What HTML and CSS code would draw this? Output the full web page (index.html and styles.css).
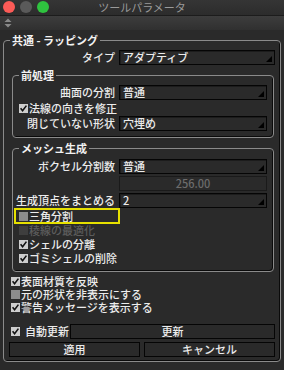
FILE: index.html
```html
<!DOCTYPE html>
<html lang="ja">
<head>
<meta charset="utf-8">
<title>ツールパラメータ</title>
<link rel="stylesheet" href="styles.css">
</head>
<body>
<div class="titlebar">
  <div class="lights"><span class="light red"></span><span class="light gray"></span><span class="light green"></span></div>
  <div class="title">ツールパラメータ</div>
  <div></div>
</div>
<div class="toolstrip">
  <svg class="updown" width="8" height="10" viewBox="0 0 8 10"><path d="M4 0.5 L7.5 4 L0.5 4 Z M4 9.5 L7.5 6 L0.5 6 Z" fill="#8a8a8a"/></svg>
</div>
<div class="panel">
  <fieldset class="group outer">
    <legend>共通 - ラッピング</legend>
    <div class="row field first">
      <span class="lbl">タイプ</span>
      <div class="select">アダプティブ</div>
    </div>

    <fieldset class="group sub pre">
      <legend>前処理</legend>
      <div class="row field first">
        <span class="lbl">曲面の分割</span>
        <div class="select">普通</div>
      </div>
      <div class="row check">
        <svg class="cb" width="9" height="9" viewBox="0 0 9 9"><rect x="0" y="0" width="9" height="9" fill="#cdcdcd"/><path d="M1.6 4.3 L3.6 6.8 L7.4 1.6" fill="none" stroke="#111" stroke-width="1.6"/></svg>
        <span>法線の向きを修正</span>
      </div>
      <div class="row field">
        <span class="lbl">閉じていない形状</span>
        <div class="select">穴埋め</div>
      </div>
    </fieldset>

    <fieldset class="group sub mesh">
      <legend>メッシュ生成</legend>
      <div class="row field first">
        <span class="lbl">ボクセル分割数</span>
        <div class="select">普通</div>
      </div>
      <div class="row field near">
        <span class="lbl"></span>
        <div class="numfield"><span class="num">256.00</span></div>
      </div>
      <div class="row field near">
        <span class="lbl">生成頂点をまとめる</span>
        <div class="select">2</div>
      </div>
      <div class="row check tall highlight-row">
        <span class="cb box off"></span>
        <span>三角分割</span>
        <span class="highlight"></span>
      </div>
      <div class="row check tall disabled">
        <span class="cb box dis"></span>
        <span>稜線の最適化</span>
      </div>
      <div class="row check tall">
        <svg class="cb" width="9" height="9" viewBox="0 0 9 9"><rect x="0" y="0" width="9" height="9" fill="#cdcdcd"/><path d="M1.6 4.3 L3.6 6.8 L7.4 1.6" fill="none" stroke="#111" stroke-width="1.6"/></svg>
        <span>シェルの分離</span>
      </div>
      <div class="row check tall">
        <svg class="cb" width="9" height="9" viewBox="0 0 9 9"><rect x="0" y="0" width="9" height="9" fill="#cdcdcd"/><path d="M1.6 4.3 L3.6 6.8 L7.4 1.6" fill="none" stroke="#111" stroke-width="1.6"/></svg>
        <span>ゴミシェルの削除</span>
      </div>
    </fieldset>

    <div class="row check outer-check first-out">
      <svg class="cb" width="9" height="9" viewBox="0 0 9 9"><rect x="0" y="0" width="9" height="9" fill="#cdcdcd"/><path d="M1.6 4.3 L3.6 6.8 L7.4 1.6" fill="none" stroke="#111" stroke-width="1.6"/></svg>
      <span>表面材質を反映</span>
    </div>
    <div class="row check outer-check">
      <span class="cb box off"></span>
      <span>元の形状を非表示にする</span>
    </div>
    <div class="row check outer-check">
      <svg class="cb" width="9" height="9" viewBox="0 0 9 9"><rect x="0" y="0" width="9" height="9" fill="#cdcdcd"/><path d="M1.6 4.3 L3.6 6.8 L7.4 1.6" fill="none" stroke="#111" stroke-width="1.6"/></svg>
      <span>警告メッセージを表示する</span>
    </div>

    <div class="row auto">
      <svg class="cb" width="9" height="9" viewBox="0 0 9 9"><rect x="0" y="0" width="9" height="9" fill="#cdcdcd"/><path d="M1.6 4.3 L3.6 6.8 L7.4 1.6" fill="none" stroke="#111" stroke-width="1.6"/></svg>
      <span class="auto-label">自動更新</span>
      <div class="btn grow">更新</div>
    </div>
    <div class="row buttons">
      <div class="btn">適用</div>
      <div class="btn">キャンセル</div>
    </div>
  </fieldset>
</div>
</body>
</html>
```

FILE: styles.css
```css
* { box-sizing: border-box; }
html, body { margin: 0; padding: 0; }
body {
  width: 284px;
  height: 370px;
  overflow: hidden;
  background: #2a2a2a;
  font-family: "Noto Sans CJK JP", "Noto Sans", sans-serif;
  font-size: 11px;
  line-height: 13px;
  font-weight: 500;
  color: #ececec;
}

.titlebar {
  height: 15px;
  display: grid;
  grid-template-columns: 1fr auto 1fr;
  align-items: start;
  background: linear-gradient(#353535, #2c2c2c);
}
.lights { display: flex; gap: 5px; padding-left: 3px; padding-top: 1px; }
.light { width: 12px; height: 12px; border-radius: 50%; display: block; }
.light.red { background: #fc5b57; }
.light.gray { background: #5a5a5a; }
.light.green { background: #2fc33f; }
.title {
  line-height: 15px;
  color: #9a9a9a;
  font-weight: 400;
}

.toolstrip {
  height: 15px;
  border-top: 1px solid #1c1c1c;
  background: linear-gradient(#3d3d3d, #303030);
  display: flex;
  align-items: center;
  padding-left: 4px;
}
.updown { display: block; }

.panel { padding: 3px 3px 0 3px; }

.group {
  margin: 0;
  padding: 0;
  border: 1px solid #8a8a8a;
  border-radius: 4px;
  box-shadow: inset -1px -1px 0 #0a0a0a;
  min-width: 0;
}
.group legend {
  padding: 0 2px;
  margin-left: 6px;
  line-height: 14px;
  height: 14px;
  font-weight: 700;
  color: #f2f2f2;
}
.outer { padding-bottom: 4px; }
.sub { margin: 3px 6px 0 8px; padding-bottom: 6px; }

.row { display: flex; align-items: center; position: relative; }
.field { height: 15px; margin-top: 1px; }
.field.first { margin-top: 3px; }
.mesh .field.first { margin-top: 4px; }
.field.near { margin-top: 2px; }

.lbl {
  flex: none;
  width: 106px;
  padding-right: 4px;
  text-align: right;
  white-space: nowrap;
}
.outer > .field .lbl { width: 115px; }

.select, .numfield {
  flex: 1 1 0;
  min-width: 0;
  height: 15px;
  border: 1px solid #050505;
  background: #2a2a2a;
  line-height: 13px;
  padding-left: 3px;
  position: relative;
  box-shadow: inset 1px 1px 0 #1c1c1c;
}
.outer > .field .select { margin-right: 5px; }
.sub .select, .sub .numfield { margin-right: 6px; }
.select::after {
  content: "";
  position: absolute;
  right: 2px;
  bottom: 2px;
  width: 0;
  height: 0;
  border-style: solid;
  border-width: 0 0 6px 6px;
  border-color: transparent transparent #000 transparent;
}
.numfield {
  display: flex;
  justify-content: center;
  align-items: center;
  border-color: #1a1a1a;
  color: #6c6c6c;
  padding-left: 0;
  box-shadow: none;
}
.num { display: block; }

.check { height: 14px; margin-top: 1px; padding-left: 6px; gap: 1px; white-space: nowrap; }
.check.tall { margin-top: 0; }
.highlight-row { margin-top: 1px !important; }
.cb { flex: none; display: block; width: 9px; height: 9px; }
.box.off { background: #8c8c8c; }
.box.dis { background: #3e3e3e; }
.disabled { color: #5c5c5c; }

.highlight {
  position: absolute;
  left: 1px;
  top: -1px;
  width: 106px;
  height: 16px;
  border: 2px solid #e6e000;
}

.outer-check { height: 13px; margin-top: 0; padding-left: 7px; gap: 1px; }
.first-out { margin-top: 3px; }

.auto { height: 15px; margin-top: 10px; padding-left: 7px; margin-right: 5px; }
.auto-label { margin-left: 5px; margin-right: 1px; }
.btn {
  height: 15px;
  border: 1px solid #050505;
  background: #2a2a2a;
  line-height: 13px;
  text-align: center;
  flex: 1 1 0;
}
.buttons { margin: 3px 5px 0 5px; gap: 4px; }
```
